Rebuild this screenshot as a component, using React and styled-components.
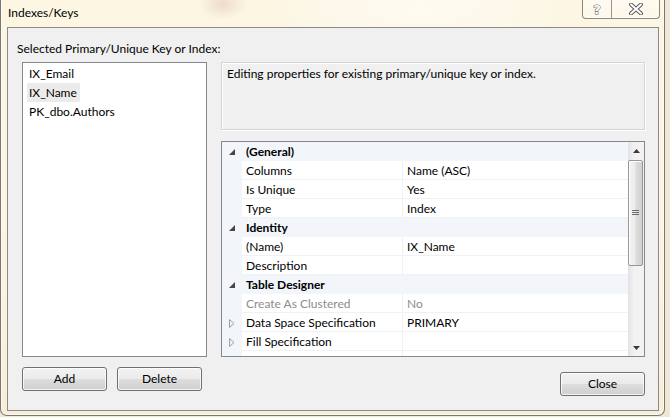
import React from "react";
import styled, { createGlobalStyle } from "styled-components";

const Global = createGlobalStyle`
  html, body { margin: 0; padding: 0; }
  body {
    background: #efe8d6;
    font-family: Lato, "Noto Sans", sans-serif;
    font-size: 12px;
    color: #000;
    width: 670px;
    height: 417px;
    overflow: hidden;
  }
`;

const Window = styled.div`
  box-sizing: border-box;
  width: 665px;
  height: 416px;
  border: 1px solid #7c776c;
  border-top: none;
  border-radius: 0 0 7px 7px;
  background:
    radial-gradient(ellipse 24px 16px at 222px 4px, rgba(200, 160, 140, 0.3), rgba(200, 160, 140, 0)),
    radial-gradient(ellipse 160px 40px at 420px 10px, rgba(255, 255, 255, 0.55), rgba(255, 255, 255, 0)),
    linear-gradient(180deg, #fdf6e3 0%, #fcf4e1 60%, #f8eed8 100%);
  box-shadow: inset 1px 0 0 rgba(255, 255, 255, 0.7), inset -1px -1px 0 rgba(255, 255, 255, 0.7);
  display: flex;
  flex-direction: column;
`;

const TitleBar = styled.div`
  height: 27px;
  display: flex;
  align-items: flex-start;
  justify-content: space-between;
  padding-left: 7px;
  padding-right: 4px;
`;

const Title = styled.div`
  line-height: 15px;
  margin-top: 5px;
  color: #000;
`;

const CaptionButtons = styled.div`
  display: flex;
  height: 18px;
  border: 1px solid #8d887c;
  border-top: none;
  border-radius: 0 0 4px 4px;
  background: linear-gradient(180deg, rgba(255, 255, 255, 0.5), rgba(255, 255, 255, 0.25));
  box-shadow: inset 0 -1px 0 rgba(255, 255, 255, 0.8);
  overflow: hidden;
`;

const CaptionButton = styled.div`
  width: ${(p) => p.$w}px;
  display: flex;
  align-items: center;
  justify-content: center;
  & + & {
    border-left: 1px solid #9a958a;
  }
`;

const Client = styled.div`
  box-sizing: border-box;
  margin: 0 5px 0 6px;
  width: 652px;
  height: 384px;
  border: 1px solid #8b8b8b;
  background: #f0f0f0;
  padding: 13px 13px 0 9px;
  display: flex;
  flex-direction: column;
`;

const Label = styled.div`
  line-height: 15px;
  height: 15px;
`;

const Panels = styled.div`
  margin: 6px 0 0 5px;
  height: 295px;
  display: grid;
  grid-template-columns: 185px 424px;
  column-gap: 14px;
`;

const ListBox = styled.div`
  box-sizing: border-box;
  border: 1px solid #828790;
  background: #fff;
  padding: 1px 0 0 4px;
`;

const ListItem = styled.div`
  width: fit-content;
  height: 19px;
  line-height: 19px;
  padding: 0 3px 0 2px;
  background: ${(p) => (p.$selected ? "#ebebeb" : "transparent")};
`;

const RightCol = styled.div`
  display: flex;
  flex-direction: column;
  gap: 11px;
`;

const Description = styled.div`
  box-sizing: border-box;
  height: 68px;
  border: 1px solid #d5d5d5;
  box-shadow: inset 1px 1px 0 #fff, 1px 1px 0 #fff;
  padding: 3px 5px;
  line-height: 15px;
`;

const Grid = styled.div`
  box-sizing: border-box;
  height: 216px;
  border: 1px solid #828790;
  background: #fff;
  display: flex;
  overflow: hidden;
`;

const Rows = styled.div`
  flex: 1;
  overflow: hidden;
`;

const Row = styled.div`
  display: grid;
  grid-template-columns: 20px 160px 1fr;
  height: 19px;
  line-height: 20px;
  background: ${(p) => (p.$category ? "#f2f5fa" : "#fff")};
`;

const Margin = styled.div`
  background: #f2f5fa;
  display: flex;
  align-items: center;
  padding-left: 7px;
  padding-top: 1px;
`;

const NameCell = styled.div`
  box-sizing: border-box;
  height: 19px;
  padding-left: 4px;
  border-bottom: 1px solid ${(p) => (p.$category ? "#f2f5fa" : "#eef1f5")};
  font-weight: ${(p) => (p.$category ? 700 : 400)};
  color: ${(p) => (p.$disabled ? "#8d8d8d" : "#000")};
  white-space: nowrap;
  ${(p) => (p.$category ? "grid-column: 2 / 4;" : "")}
`;

const ValueCell = styled.div`
  box-sizing: border-box;
  height: 19px;
  padding-left: 4px;
  border-left: 1px solid #eef1f5;
  border-bottom: 1px solid #eef1f5;
  color: ${(p) => (p.$disabled ? "#8d8d8d" : "#000")};
  white-space: nowrap;
`;

const ScrollBar = styled.div`
  width: 16px;
  display: flex;
  flex-direction: column;
  background: linear-gradient(90deg, #e3e3e3 0%, #f2f2f2 40%, #f2f2f2 100%);
`;

const ArrowBtn = styled.div`
  height: 17px;
  display: flex;
  align-items: center;
  justify-content: center;
`;

const Track = styled.div`
  flex: 1;
  padding-top: 1px;
  display: flex;
  flex-direction: column;
`;

const Thumb = styled.div`
  box-sizing: border-box;
  width: 15px;
  height: 106px;
  border: 1px solid #979797;
  border-radius: 2px;
  background: linear-gradient(90deg, #f3f3f3 0%, #ececec 45%, #dcdcdc 55%, #d2d2d2 100%);
  box-shadow: inset 1px 1px 0 #fff;
  display: flex;
  align-items: center;
  justify-content: center;
`;

const Buttons = styled.div`
  display: flex;
  align-items: flex-start;
  margin: 10px 0 0 5px;
`;

const Button = styled.div`
  box-sizing: border-box;
  width: 85px;
  height: 24px;
  margin-right: ${(p) => (p.$last ? 0 : 10)}px;
  margin-top: ${(p) => p.$offset || 0}px;
  border: 1px solid #707070;
  border-radius: 3px;
  background: linear-gradient(180deg, #f2f2f2 0%, #ebebeb 48%, #dddddd 52%, #cfcfcf 100%);
  box-shadow: inset 0 0 0 1px rgba(255, 255, 255, 0.75);
  display: flex;
  align-items: center;
  justify-content: center;
  line-height: 15px;
  padding-bottom: 1px;
`;

const Spacer = styled.div`
  flex: 1;
`;

const CatGlyph = () => (
  <svg width="6" height="6" viewBox="0 0 6 6">
    <path d="M6 0 L6 6 L0 6 Z" fill="#454545" />
  </svg>
);

const ExpGlyph = () => (
  <svg width="6" height="9" viewBox="0 0 6 9">
    <path d="M0.5 0.5 L5 4.5 L0.5 8.5 Z" fill="none" stroke="#a0a0a0" strokeWidth="1" />
  </svg>
);

const rows = [
  { cat: true, name: "(General)" },
  { name: "Columns", value: "Name (ASC)" },
  { name: "Is Unique", value: "Yes" },
  { name: "Type", value: "Index" },
  { cat: true, name: "Identity" },
  { name: "(Name)", value: "IX_Name" },
  { name: "Description", value: "" },
  { cat: true, name: "Table Designer" },
  { name: "Create As Clustered", value: "No", disabled: true },
  { name: "Data Space Specification", value: "PRIMARY", exp: true },
  { name: "Fill Specification", value: "", exp: true },
  { name: "", value: "" },
];

export default function App() {
  return (
    <>
      <Global />
      <Window>
        <TitleBar>
          <Title>Indexes/Keys</Title>
          <CaptionButtons>
            <CaptionButton $w={28}>
              <svg width="14" height="14" viewBox="0 0 14 14">
                <text
                  x="7"
                  y="12"
                  textAnchor="middle"
                  fontFamily="DejaVu Sans, sans-serif"
                  fontWeight="700"
                  fontSize="13"
                  fill="#fff"
                  stroke="#5b5b5b"
                  strokeWidth="1"
                  paintOrder="stroke"
                >
                  ?
                </text>
              </svg>
            </CaptionButton>
            <CaptionButton $w={47}>
              <svg width="14" height="12" viewBox="0 0 14 12">
                <path d="M2 1.5 L12 10.5 M12 1.5 L2 10.5" stroke="#5b5b5b" strokeWidth="4" strokeLinecap="round" />
                <path d="M2 1.5 L12 10.5 M12 1.5 L2 10.5" stroke="#fff" strokeWidth="2" strokeLinecap="round" />
              </svg>
            </CaptionButton>
          </CaptionButtons>
        </TitleBar>
        <Client>
          <Label>Selected Primary/Unique Key or Index:</Label>
          <Panels>
            <ListBox>
              <ListItem>IX_Email</ListItem>
              <ListItem $selected>IX_Name</ListItem>
              <ListItem>PK_dbo.Authors</ListItem>
            </ListBox>
            <RightCol>
              <Description>Editing properties for existing primary/unique key or index.</Description>
              <Grid>
                <Rows>
                  {rows.map((r, i) => (
                    <Row key={i} $category={r.cat}>
                      <Margin>{r.cat ? <CatGlyph /> : r.exp ? <ExpGlyph /> : null}</Margin>
                      {r.cat ? (
                        <NameCell $category>{r.name}</NameCell>
                      ) : (
                        <>
                          <NameCell $disabled={r.disabled}>{r.name}</NameCell>
                          <ValueCell $disabled={r.disabled}>{r.value}</ValueCell>
                        </>
                      )}
                    </Row>
                  ))}
                </Rows>
                <ScrollBar>
                  <ArrowBtn>
                    <svg width="7" height="4" viewBox="0 0 7 4">
                      <path d="M0 4 L3.5 0 L7 4 Z" fill="#3a3a3a" />
                    </svg>
                  </ArrowBtn>
                  <Track>
                    <Thumb>
                      <svg width="7" height="6" viewBox="0 0 7 6">
                        <path d="M0 0.5 H7 M0 2.5 H7 M0 4.5 H7" stroke="#6a6a6a" strokeWidth="1" />
                      </svg>
                    </Thumb>
                  </Track>
                  <ArrowBtn>
                    <svg width="7" height="4" viewBox="0 0 7 4">
                      <path d="M0 0 L7 0 L3.5 4 Z" fill="#3a3a3a" />
                    </svg>
                  </ArrowBtn>
                </ScrollBar>
              </Grid>
            </RightCol>
          </Panels>
          <Buttons>
            <Button>Add</Button>
            <Button>Delete</Button>
            <Spacer />
            <Button $offset={5} $last>Close</Button>
          </Buttons>
        </Client>
      </Window>
    </>
  );
}
